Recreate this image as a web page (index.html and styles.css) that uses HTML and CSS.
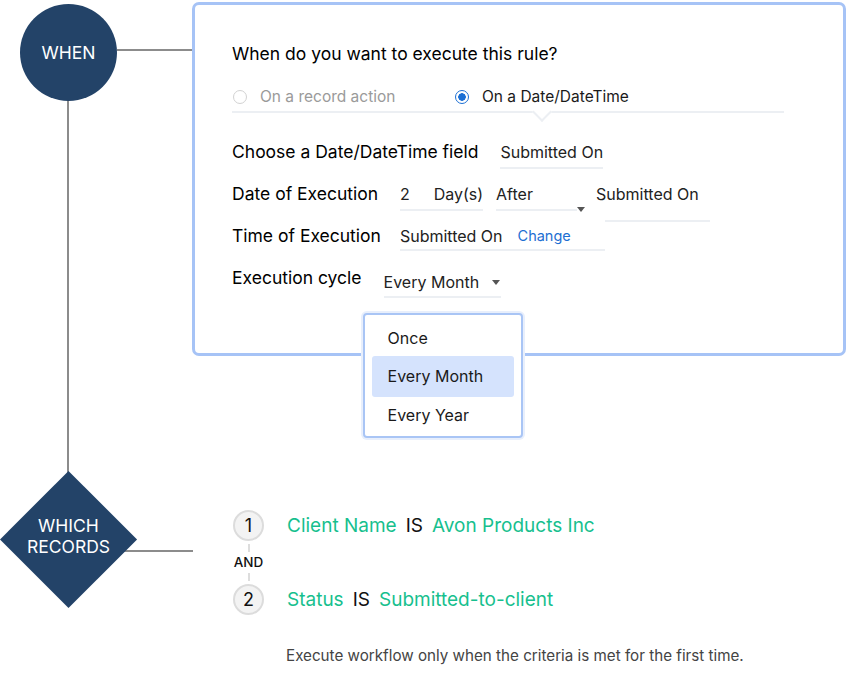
FILE: index.html
```html
<!DOCTYPE html>
<html lang="en">
<head>
  <meta charset="UTF-8">
  <title>Workflow rule</title>
  <link rel="stylesheet" href="styles.css">
</head>
<body>

<div class="flow">
  <div class="rail"></div>

  <!-- WHEN -->
  <section class="step step-when">
    <div class="node-circle">WHEN</div>
    <div class="link link-when"></div>

    <div class="rule-card">
      <h2 class="rule-title">When do you want to execute this rule?</h2>

      <div class="trigger-tabs">
        <label class="trigger trigger-off"><span class="radio"></span>On a record action</label>
        <label class="trigger trigger-on"><span class="radio radio-on"></span>On a Date/DateTime</label>
        <span class="tab-notch"></span>
      </div>

      <div class="field-row">
        <span class="field-label">Choose a Date/DateTime field</span>
        <span class="field w-date">Submitted On</span>
      </div>

      <div class="field-row">
        <span class="field-label">Date of Execution</span>
        <span class="field w-days"><span class="num">2</span>Day(s)</span>
        <span class="field w-after">After<i class="caret"></i></span>
        <span class="field-offset">Submitted On</span>
      </div>

      <div class="field-row">
        <span class="field-label">Time of Execution</span>
        <span class="field w-time">Submitted On <a href="#" class="change-link">Change</a></span>
      </div>

      <div class="field-row">
        <span class="field-label">Execution cycle</span>
        <span class="field w-cycle">Every Month<i class="caret"></i>
          <ul class="dropdown">
            <li>Once</li>
            <li class="selected">Every Month</li>
            <li>Every Year</li>
          </ul>
        </span>
      </div>
    </div>
  </section>

  <!-- WHICH RECORDS -->
  <section class="step step-which">
    <div class="node-diamond">
      <div class="diamond-shape"></div>
      <span class="diamond-text">WHICH<br>RECORDS</span>
    </div>
    <div class="link link-which"></div>

    <div class="criteria">
      <div class="crit-row">
        <span class="crit-num">1</span>
        <span class="crit-field">Client Name</span>
        <span class="crit-op">IS</span>
        <span class="crit-field">Avon Products Inc</span>
      </div>
      <div class="crit-and">AND</div>
      <div class="crit-row">
        <span class="crit-num">2</span>
        <span class="crit-field">Status</span>
        <span class="crit-op">IS</span>
        <span class="crit-field">Submitted-to-client</span>
      </div>
      <p class="crit-note">Execute workflow only when the criteria is met for the first time.</p>
    </div>
  </section>
</div>

</body>
</html>
```

FILE: styles.css
```css
/* BASE */
* {
  box-sizing: border-box;
}
body {
  margin: 0;
  background: #fff;
  color: #111;
  font-family: Inter, "Noto Sans", sans-serif;
}
a {
  text-decoration: none;
}

/* FLOW */
.flow {
  position: relative;
  width: 847px;
  height: 686px;
  padding-top: 2px;
}
.rail {
  position: absolute;
  left: 67px;
  top: 100px;
  width: 2px;
  height: 374px;
  background: #8c8c8c;
}
.step {
  display: flex;
  align-items: flex-start;
}
.link {
  height: 2px;
  background: #8c8c8c;
}

/* WHEN */
.node-circle {
  width: 97px;
  height: 97px;
  margin: 2px 0 0 20px;
  border-radius: 50%;
  background: #234368;
  color: #fff;
  font-size: 17.5px;
  display: flex;
  align-items: center;
  justify-content: center;
  position: relative;
  z-index: 1;
}
.link-when {
  width: 75px;
  margin-top: 47px;
}
.rule-card {
  position: relative;
  width: 654px;
  height: 354px;
  border: 3px solid #a6c3f6;
  border-radius: 7px;
  padding: 37px 0 0 37px;
}
.rule-title {
  margin: 0;
  font-size: 17.5px;
  font-weight: 400;
  line-height: 24px;
  color: #000;
}

/* TRIGGER TABS */
.trigger-tabs {
  position: relative;
  display: flex;
  width: 552px;
  margin-top: 19px;
  padding-bottom: 2px;
  border-bottom: 2px solid #eceff3;
}
.trigger {
  display: flex;
  align-items: center;
  font-size: 15.5px;
  line-height: 24px;
}
.trigger-off {
  color: #9a9a9a;
  width: 222px;
}
.trigger-on {
  color: #1a1a1a;
}
.radio {
  width: 14px;
  height: 14px;
  margin: 0 13px 0 1px;
  border: 1.5px solid #d2d2d2;
  border-radius: 50%;
}
.radio-on {
  border-color: #1b6fd4;
  background: radial-gradient(circle, #1b6fd4 0 3.5px, #fff 4px);
}
.tab-notch {
  position: absolute;
  left: 303px;
  bottom: -8px;
  width: 14px;
  height: 14px;
  background: #fff;
  border-right: 2px solid #eceff3;
  border-bottom: 2px solid #eceff3;
  transform: rotate(45deg);
}

/* FIELDS */
.field-row {
  display: flex;
  align-items: flex-start;
  gap: 22px;
  height: 24px;
  margin-top: 27px;
  font-size: 17.5px;
  line-height: 24px;
}
.field-row + .field-row {
  margin-top: 18px;
}
.field-label {
  color: #000;
  white-space: nowrap;
}
.field {
  position: relative;
  display: flex;
  align-items: center;
  flex: none;
  font-size: 16px;
  line-height: 24px;
  color: #222;
  padding-bottom: 3px;
  border-bottom: 2px solid #eceff3;
  white-space: nowrap;
}
.w-date { width: 103px; }
.w-days { width: 83px; }
.w-days .num { width: 36px; }
.w-after { width: 81px; margin-left: -9px; }
.w-time { width: 205px; padding-bottom: 1px; margin-left: -3px; }
.w-cycle { width: 117px; margin-top: 4px; padding-bottom: 2px; }
.field-offset {
  font-size: 16px;
  line-height: 24px;
  color: #222;
  margin-left: -3px;
  white-space: nowrap;
}
.field-offset::after {
  content: "";
  display: block;
  width: 105px;
  height: 2px;
  margin: 14px 0 0 9px;
  background: #eceff3;
}
.change-link {
  margin-left: 15px;
  font-size: 14.5px;
  color: #1e6fd2;
}
.caret {
  position: absolute;
  width: 0;
  height: 0;
  border-left: 4.5px solid transparent;
  border-right: 4.5px solid transparent;
  border-top: 5px solid #555;
}
.w-after .caret { right: -8px; bottom: -3px; }
.w-cycle .caret { right: 1px; top: 10px; }

/* DROPDOWN */
.dropdown {
  position: absolute;
  left: -21px;
  top: 43px;
  width: 160px;
  margin: 0;
  padding: 5px 7px 3px;
  list-style: none;
  background: #fff;
  border: 2px solid #a9c5f5;
  border-radius: 4px;
  box-shadow: 0 0 0 2px #e8effc;
  z-index: 2;
}
.dropdown li {
  height: 36px;
  padding-left: 16px;
  font-size: 16px;
  line-height: 36px;
  color: #1a1a1a;
  border-radius: 3px;
}
.dropdown li.selected {
  height: 41px;
  line-height: 41px;
  background: #d5e3fd;
}

/* WHICH RECORDS */
.step-which {
  margin-top: 115px;
}
.node-diamond {
  position: relative;
  z-index: 1;
  width: 137px;
  height: 137px;
  display: flex;
  align-items: center;
  justify-content: center;
}
.diamond-shape {
  position: absolute;
  width: 97px;
  height: 97px;
  background: #234368;
  transform: rotate(45deg);
}
.diamond-text {
  position: relative;
  margin-top: -8px;
  text-align: center;
  color: #fff;
  font-size: 17.5px;
  line-height: 21px;
}
.link-which {
  width: 71px;
  margin: 79px 0 0 -15px;
}

/* CRITERIA */
.criteria {
  margin: 39px 0 0 40px;
}
.crit-row {
  display: flex;
  align-items: center;
  height: 31px;
  font-size: 19px;
}
.crit-num {
  width: 31px;
  height: 31px;
  margin-right: 23px;
  border: 2px solid #dcdcdc;
  border-radius: 50%;
  background: #f3f3f3;
  display: flex;
  align-items: center;
  justify-content: center;
  font-size: 18px;
  color: #111;
}
.crit-field {
  color: #17bf8e;
}
.crit-op {
  margin: 0 9px;
  color: #111;
}
.crit-and {
  position: relative;
  width: 31px;
  height: 43px;
  text-align: center;
  font-size: 13.5px;
  font-weight: 500;
  line-height: 43px;
  color: #111;
}
.crit-and::before,
.crit-and::after {
  content: "";
  position: absolute;
  left: 15px;
  width: 2px;
  height: 8px;
  background: #ddd;
}
.crit-and::before { top: 3px; }
.crit-and::after { bottom: 3px; }
.crit-note {
  margin: 31px 0 0 53px;
  font-size: 15.2px;
  line-height: 20px;
  color: #444;
}
```
